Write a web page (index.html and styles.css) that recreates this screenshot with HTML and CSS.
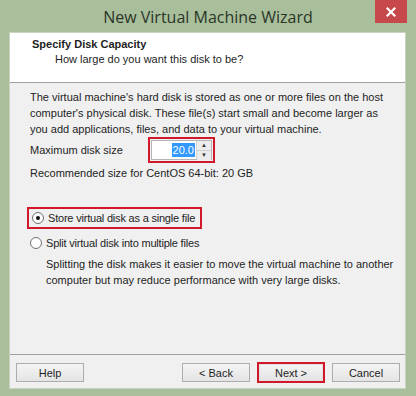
FILE: index.html
```html
<!doctype html>
<html lang="en">
	<head>
		<meta charset="UTF-8" />
		<title>New Virtual Machine Wizard</title>
		<link rel="stylesheet" href="styles.css">
	</head>
	<body>
		<div class="window">
			<div class="titlebar">
				<span class="title">New Virtual Machine Wizard</span>
				<button class="close-btn" aria-label="Close">
					<svg width="10" height="10" viewBox="0 0 10 10">
						<path d="M1.5 1.5 L8.5 8.5 M8.5 1.5 L1.5 8.5" stroke="#fff" stroke-width="2.2" stroke-linecap="square" />
					</svg>
				</button>
			</div>

			<div class="client">
				<div class="header">
					<div class="header-title">Specify Disk Capacity</div>
					<div class="header-sub">How large do you want this disk to be?</div>
				</div>

				<div class="body">
					<p class="intro">
						The virtual machine's hard disk is stored as one or more files on the host<br>
						computer's physical disk. These file(s) start small and become larger as<br>
						you add applications, files, and data to your virtual machine.
					</p>

					<div class="size-row">
						<label class="size-label">Maximum disk size</label>
						<div class="mark mark-input">
							<div class="spin">
								<div class="spin-value"><span class="sel">20.0</span></div>
								<div class="spin-arrows">
									<span class="arrow">&#9650;</span>
									<span class="arrow">&#9660;</span>
								</div>
							</div>
						</div>
					</div>

					<p class="recommend">Recommended size for CentOS 64-bit: 20 GB</p>

					<div class="options">
						<div class="mark mark-radio">
							<label class="radio"><span class="dot checked"></span>Store virtual disk as a single file</label>
						</div>
						<label class="radio second"><span class="dot"></span>Split virtual disk into multiple files</label>
						<p class="split-note">
							Splitting the disk makes it easier to move the virtual machine to another<br>
							computer but may reduce performance with very large disks.
						</p>
					</div>
				</div>

				<div class="footer">
					<button class="btn">Help</button>
					<div class="footer-right">
						<button class="btn">&lt; Back</button>
						<div class="mark mark-btn"><button class="btn">Next &gt;</button></div>
						<button class="btn">Cancel</button>
					</div>
				</div>
			</div>
		</div>
	</body>
</html>
```

FILE: styles.css
```css
* {
	margin: 0;
	padding: 0;
	box-sizing: border-box;
}

body {
	font-family: "Liberation Sans", Arial, sans-serif;
	font-size: 11px;
	color: #1e1e1e;
	background: #a9bf9b;
}

.window {
	width: 416px;
	height: 396px;
	display: flex;
	flex-direction: column;
	background: #a9bf9b;
}

.titlebar {
	position: relative;
	height: 32px;
	display: flex;
	align-items: center;
	justify-content: center;
}

.title {
	font-family: "Open Sans", sans-serif;
	font-size: 16px;
	color: #2b3527;
	padding-top: 1px;
}

.close-btn {
	position: absolute;
	top: 0;
	right: 9px;
	width: 32px;
	height: 23px;
	border: none;
	background: #c7484a;
	display: flex;
	align-items: center;
	justify-content: center;
}

.client {
	flex: 1;
	margin: 0 10px 7px 9px;
	border: 1px solid #c8d3c0;
	display: flex;
	flex-direction: column;
	background: #f0f0f0;
}

.header {
	height: 50px;
	background: #fff;
	border-bottom: 1px solid #a0a0a0;
	padding: 4px 0 0 22px;
}

.header-title {
	font-weight: bold;
	line-height: 14px;
}

.header-sub {
	margin: 1px 0 0 23px;
	line-height: 14px;
}

.body {
	flex: 1;
	padding: 6px 6px 0 20px;
}

.intro {
	line-height: 16px;
}

.size-row {
	display: flex;
	align-items: center;
}

.size-label {
	width: 118px;
	line-height: 14px;
}

.mark {
	border: 2px solid #d3172b;
}

.mark-input {
	padding: 1px;
}

.spin {
	display: flex;
	width: 61px;
	height: 20px;
	background: #fff;
	border: 1px solid #b5b5b5;
}

.spin-value {
	flex: 1;
	display: flex;
	align-items: center;
	justify-content: flex-end;
	padding-right: 1px;
}

.sel {
	background: #3399ff;
	color: #fff;
	font-size: 11px;
	line-height: 14px;
	padding: 0 1px;
}

.spin-arrows {
	width: 15px;
	display: flex;
	flex-direction: column;
	border-left: 1px solid #d6d6d6;
}

.arrow {
	flex: 1;
	font-size: 6px;
	line-height: 9px;
	text-align: center;
	color: #333;
	background: #ececec;
}

.arrow + .arrow {
	border-top: 1px solid #d0d0d0;
}

.recommend {
	margin-top: 2px;
	line-height: 16px;
}

.options {
	margin-top: 26px;
}

.mark-radio {
	width: fit-content;
	margin-left: -3px;
	padding: 2px 5px 2px 3px;
}

.radio {
	display: flex;
	align-items: center;
	gap: 4px;
	line-height: 14px;
	white-space: nowrap;
	letter-spacing: -0.2px;
}

.radio.second {
	margin-top: 7px;
}

.dot {
	flex: none;
	width: 12px;
	height: 12px;
	border-radius: 50%;
	border: 1px solid #6f6f6f;
	background: #fff;
	position: relative;
}

.dot.checked::after {
	content: "";
	position: absolute;
	left: 3px;
	top: 3px;
	width: 4px;
	height: 4px;
	border-radius: 50%;
	background: #111;
}

.split-note {
	margin: 6px 0 0 16px;
	line-height: 16px;
}

.footer {
	height: 34px;
	border-top: 1px solid #a0a0a0;
	display: flex;
	align-items: center;
	justify-content: space-between;
	padding: 2px 5px 0 6px;
}

.footer-right {
	display: flex;
	align-items: center;
	gap: 7px;
}

.btn {
	width: 68px;
	height: 19px;
	font-family: inherit;
	font-size: 11px;
	color: #1e1e1e;
	background: linear-gradient(#f4f4f4, #e4e4e4);
	border: 1px solid #adadad;
}

.mark-btn {
	display: flex;
}

.mark-btn .btn {
	width: 64px;
	height: 17px;
	border: 1px solid #e0e0e0;
}
```
